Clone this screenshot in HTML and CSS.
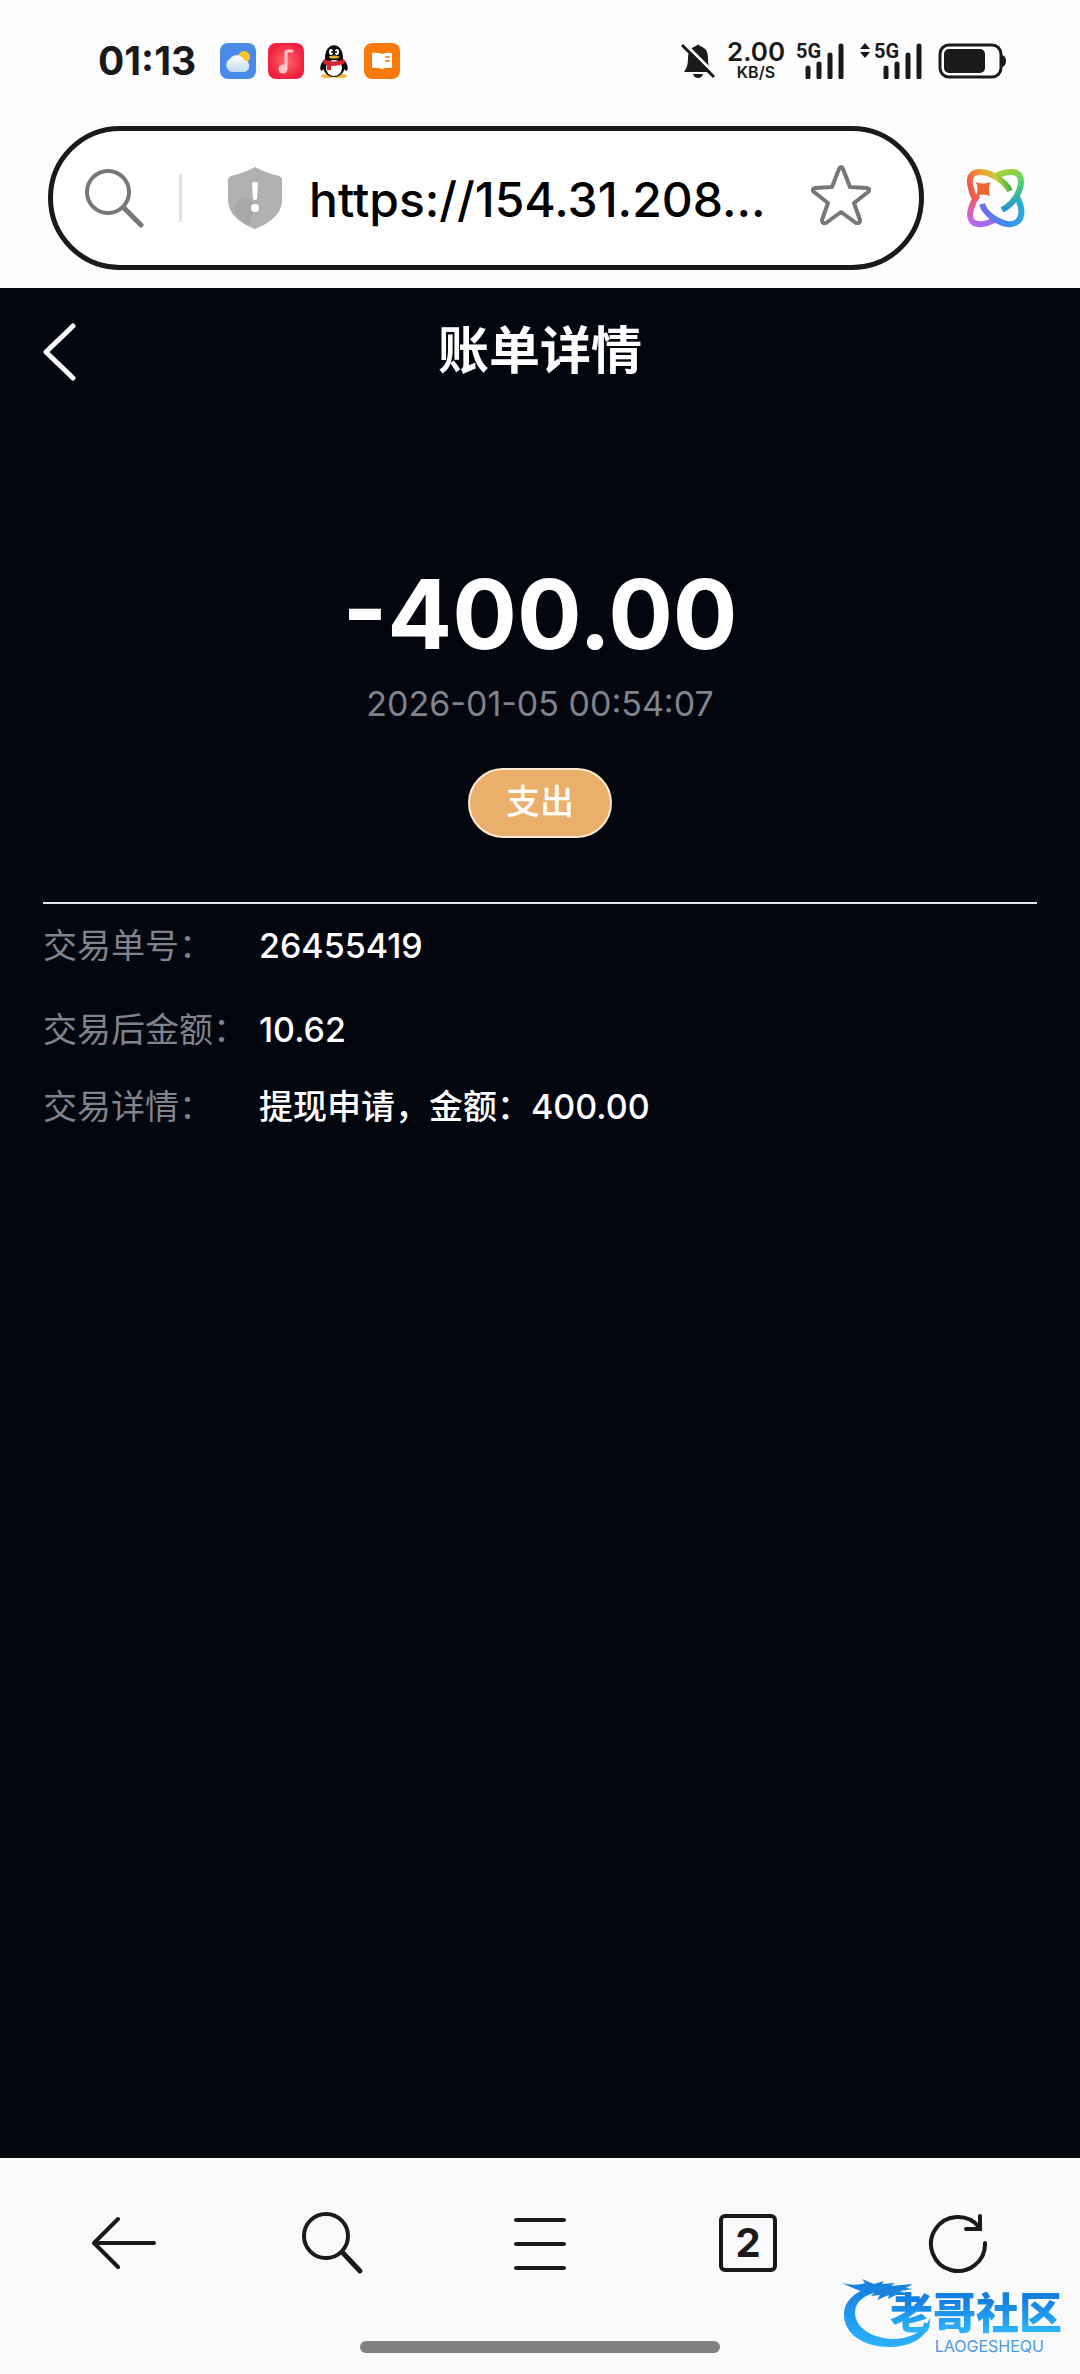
FILE: index.html
```html
<!DOCTYPE html>
<html lang="zh-CN">
<head>
    <meta charset="UTF-8">
    <meta name="viewport" content="width=device-width, initial-scale=1.0">
    <title>账单详情</title>
    <link rel="stylesheet" href="styles.css">
</head>
<body>
    <div class="status-bar">
        <div class="status-left">
            <span class="clock">01:13</span>
            <svg class="app-icon" viewBox="0 0 36 36">
                <defs>
                    <linearGradient id="cloud" x1="0" y1="0" x2="0" y2="1">
                        <stop offset="0" stop-color="#fff"/>
                        <stop offset="1" stop-color="#c3d9f3"/>
                    </linearGradient>
                </defs>
                <rect width="36" height="36" rx="8" fill="#4a8be8"/>
                <circle cx="24" cy="14" r="6" fill="#fbc52c"/>
                <path d="M12 29a7 7 0 0 1-2-13 8 8 0 0 1 14 1 6.200 6.200 0 0 1 1 12z" fill="url(#cloud)"/>
            </svg>
            <svg class="app-icon" viewBox="0 0 36 36">
                <defs>
                    <radialGradient id="music">
                        <stop offset="0" stop-color="#ff6a6a"/>
                        <stop offset="1" stop-color="#f0203f"/>
                    </radialGradient>
                </defs>
                <rect width="36" height="36" rx="8" fill="url(#music)"/>
                <circle cx="15" cy="26" r="4.500" fill="#ffc4c4"/>
                <path d="M18 26V10q0-2 2-2h4" fill="none" stroke="#ffc4c4" stroke-width="3" stroke-linecap="round"/>
            </svg>
            <svg class="app-icon" viewBox="0 0 36 36">
                <ellipse cx="12" cy="33" rx="7" ry="2" fill="#f0b53a"/>
                <ellipse cx="24" cy="33" rx="7" ry="2" fill="#f0b53a"/>
                <path d="M8 17C4 21 3 27 6 28l4-5zM28 17c4 4 5 10 2 11l-4-5z" fill="#0b0b0f"/>
                <ellipse cx="18" cy="23" rx="11" ry="11" fill="#0b0b0f"/>
                <path d="M9 15C9-2 27-2 27 15v5H9z" fill="#0b0b0f"/>
                <ellipse cx="18" cy="25" rx="8" ry="8" fill="#fff"/>
                <path d="M8 16q10 5 20 0l1 4q-5 3-14 3v4h-4v-5l-4-2z" fill="#d8232f"/>
                <ellipse cx="15" cy="9" rx="2" ry="3" fill="#fff"/>
                <ellipse cx="21" cy="9" rx="2" ry="3" fill="#fff"/>
                <circle cx="16" cy="9" r="1" fill="#111"/>
                <circle cx="20" cy="9" r="1" fill="#111"/>
                <ellipse cx="18" cy="14" rx="5" ry="1.500" fill="#f3b12c"/>
            </svg>
            <svg class="app-icon" viewBox="0 0 36 36">
                <rect width="36" height="36" rx="8" fill="#f97a08"/>
                <path d="M8 10q5-1 10 1 5-2 10-1v15q-5-1-10 1-5-2-10-1z" fill="#fff"/>
                <path d="M21 14h5M21 18h5" stroke="#f97a08" stroke-width="1.500"/>
            </svg>
        </div>
        <div class="status-right">
            <svg width="36" height="36" viewBox="0 0 36 36">
                <path d="M4 29c3-4 4-8 4-14C8 8 12 4 16 3q2-3 4 0c6 2 8 6 8 12 0 7 1 10 4 14z" fill="#1a1a1a"/>
                <path d="M13 31h10q-1 4-5 4t-5-4z" fill="#1a1a1a"/>
                <path d="M4 0l33 33" stroke="#fff" stroke-width="3"/>
                <path d="M2 2l32 32" stroke="#1a1a1a" stroke-width="3"/>
            </svg>
            <div class="net-speed">
                <span class="speed-value">2.00</span>
                <span class="speed-unit">KB/S</span>
            </div>
            <div class="signal">
                <span class="signal-type">5G</span>
                <svg width="40" height="36" viewBox="0 0 40 36">
                    <path d="M4 25v9M15 21v13M26 12v22M37 3v31" stroke="#1a1a1a" stroke-width="5" stroke-linecap="round"/>
                </svg>
            </div>
            <div class="signal signal-second">
                <span class="signal-type">5G</span>
                <svg width="62" height="36" viewBox="0 0 62 36">
                    <path d="M0 6l5-6 5 6zM0 9h10l-5 6z" fill="#1a1a1a"/>
                    <path d="M26 25v9M37 21v13M48 12v22M59 3v31" stroke="#1a1a1a" stroke-width="5" stroke-linecap="round"/>
                </svg>
            </div>
            <svg width="68" height="36" viewBox="0 0 68 36">
                <rect x="2" y="2" width="61" height="32" rx="9" fill="none" stroke="#1a1a1a" stroke-width="3"/>
                <rect x="6" y="6" width="41" height="24" rx="5" fill="#1a1a1a"/>
                <path d="M64 12q4 1 4 6t-4 6z" fill="#1a1a1a"/>
            </svg>
        </div>
    </div>

    <div class="address-row">
        <form class="address-bar">
            <svg class="address-search" viewBox="0 0 60 60" fill="none" stroke="#777" stroke-linecap="round">
                <circle cx="24" cy="24" r="21" stroke-width="4"/>
                <path d="M40 40l17 17" stroke-width="5"/>
            </svg>
            <span class="address-divider"></span>
            <svg class="address-shield" viewBox="0 0 54 62">
                <path d="M27 0Q38 6 51 9q3 1 3 4v20C54 48 40 57 27 62 14 57 0 48 0 33V13q0-3 3-4Q16 6 27 0z" fill="#b1b1b1"/>
                <path d="M6 40q3-9 14-9l7 8-6 20Q9 52 6 40z" fill="#a8a8a8"/>
                <path d="M24 16q3-3 6 0l-1 16q-2 2-4 0z" fill="#fff"/>
                <circle cx="27" cy="41" r="4" fill="#fff"/>
            </svg>
            <input class="address-input" type="text" value="https://154.31.208..." aria-label="网址">
            <button class="icon-btn star-btn" type="button" aria-label="收藏">
                <svg width="60" height="60" viewBox="0 0 60 60">
                    <path d="M28 4q2-4 4 0l7 18 17 1q4 1 1 4L43 38l6 17q0 4-4 3L30 47 15 58q-4 1-4-3l6-17L3 27q-3-3 1-4l17-1z" fill="none" stroke="#777" stroke-width="4" stroke-linejoin="round"/>
                </svg>
            </button>
        </form>
        <button class="icon-btn" type="button" aria-label="AI 助手">
            <svg width="60" height="60" viewBox="-1 -1 60 60" fill="none" stroke-width="6" stroke-linecap="butt">
                <defs>
                    <linearGradient id="g1" gradientUnits="userSpaceOnUse" x1="3" y1="30" x2="43" y2="16">
                        <stop offset="0" stop-color="#f04a58"/>
                        <stop offset=".45" stop-color="#f59b2c"/>
                        <stop offset=".75" stop-color="#c5cb35"/>
                        <stop offset="1" stop-color="#38b84c"/>
                    </linearGradient>
                    <linearGradient id="g2" gradientUnits="userSpaceOnUse" x1="30" y1="4" x2="44" y2="42">
                        <stop offset="0" stop-color="#a5d338"/>
                        <stop offset=".5" stop-color="#4ace78"/>
                        <stop offset="1" stop-color="#1f8be0"/>
                    </linearGradient>
                    <linearGradient id="g3" gradientUnits="userSpaceOnUse" x1="54" y1="30" x2="16" y2="46">
                        <stop offset="0" stop-color="#28b2d4"/>
                        <stop offset=".5" stop-color="#3590ee"/>
                        <stop offset="1" stop-color="#7a68ec"/>
                    </linearGradient>
                    <linearGradient id="g4" gradientUnits="userSpaceOnUse" x1="10" y1="28" x2="22" y2="54">
                        <stop offset="0" stop-color="#ee5575"/>
                        <stop offset=".6" stop-color="#cb67dc"/>
                        <stop offset="1" stop-color="#9b6cf4"/>
                    </linearGradient>
                </defs>
                <path d="M29 50C22 54 16 56 11 55 3 54 2 47 4 40c1-4 3-9 7-14" stroke="url(#g4)"/>
                <path d="M49 26c5 9 6 16 5 20-1 7-7 10-14 9-10-2-22-10-25-20" stroke="url(#g3)"/>
                <path d="M27 8c7-4 13-5 18-5 9 0 11 9 7 19-3 8-10 15-17 19" stroke="url(#g2)"/>
                <path d="M43 22C38 12 24 3 13 3 4 3 1 9 4 19c1 5 2 8 5 12" stroke="url(#g1)"/>
                <path d="M9 13q7 3 14 0-2 7 0 14-7-3-14 0 3-7 0-14z" fill="#f0652f"/>
            </svg>
        </button>
    </div>

    <main class="bill">
        <header class="bill-header">
            <button class="icon-btn back-btn" type="button" aria-label="返回">
                <svg width="34" height="60" viewBox="0 0 34 60">
                    <path d="M31 4L4 30l27 26" fill="none" stroke="#fff" stroke-width="5" stroke-linecap="round" stroke-linejoin="round"/>
                </svg>
            </button>
            <h1>账单详情</h1>
        </header>

        <section class="bill-summary">
            <div class="amount">-400.00</div>
            <div class="bill-time">2026-01-05 00:54:07</div>
            <span class="bill-type">支出</span>
        </section>

        <dl class="bill-info">
            <div class="info-row">
                <dt>交易单号：</dt>
                <dd>26455419</dd>
            </div>
            <div class="info-row">
                <dt>交易后金额：</dt>
                <dd>10.62</dd>
            </div>
            <div class="info-row">
                <dt>交易详情：</dt>
                <dd>提现申请，金额：400.00</dd>
            </div>
        </dl>
    </main>

    <footer class="browser-footer">
        <nav class="toolbar">
            <button class="icon-btn" type="button" aria-label="后退">
                <svg width="64" height="64" viewBox="0 0 64 64">
                    <path d="M62 32H2M26 8L2 32l24 24" fill="none" stroke="#1a1a1a" stroke-width="4" stroke-linecap="round" stroke-linejoin="round"/>
                </svg>
            </button>
            <button class="icon-btn" type="button" aria-label="搜索">
                <svg width="64" height="64" viewBox="0 0 64 64" fill="none" stroke="#1a1a1a" stroke-width="4" stroke-linecap="round">
                    <circle cx="26" cy="25" r="22"/>
                    <path d="M43 42l17 18" stroke-width="5"/>
                </svg>
            </button>
            <button class="icon-btn" type="button" aria-label="菜单">
                <svg width="64" height="64" viewBox="0 0 64 64">
                    <path d="M8 9h48M8 33h48M8 57h48" stroke="#1a1a1a" stroke-width="4" stroke-linecap="round"/>
                </svg>
            </button>
            <button class="tab-count" type="button" aria-label="标签页">2</button>
            <button class="icon-btn" type="button" aria-label="刷新">
                <svg width="64" height="64" viewBox="0 0 64 64" fill="none" stroke="#1a1a1a" stroke-width="4" stroke-linecap="round">
                    <path d="M61 32A27 27 0 1 1 55 16"/>
                    <path d="M56 5v13H42"/>
                </svg>
            </button>
        </nav>
        <div class="home-handle"></div>
        <div class="watermark">
            <svg class="watermark-dragon" viewBox="0 0 92 72">
                <defs>
                    <linearGradient id="dragon" x1="0" y1="0" x2="0" y2="1">
                        <stop offset="0" stop-color="#1480e0"/>
                        <stop offset="1" stop-color="#2cb2fb"/>
                    </linearGradient>
                </defs>
                <path d="M36 7C14 12 2 22 2 37c0 19 20 32 46 32 22 0 40-11 40-29-6 14-20 21-38 21-20-1-37-11-37-27 0-10 9-18 27-21z" fill="url(#dragon)"/>
                <path d="M0 5q10 3 20 1l3-1-3-4 12 5 10-3-2 3 13-1-4 3 22-2-7 4 7 1-13 2 10 4-14 0-8 4 1-4-12 5 3-5-9 1 4-4-9 1Q10 10 0 5z" fill="#1b82dd"/>
            </svg>
            <span class="watermark-name">老哥社区</span>
            <span class="watermark-pinyin">LAOGESHEQU</span>
        </div>
    </footer>
</body>
</html>
```
FILE: styles.css
```css
* {
    box-sizing: border-box;
}

body {
    margin: 0;
    min-height: 100vh;
    display: flex;
    flex-direction: column;
    font-family: Inter, "Noto Sans CJK SC", sans-serif;
    background-color: #fdfdfd;
    color: #1a1a1a;
}

svg {
    display: block;
    flex-shrink: 0;
}

.icon-btn {
    padding: 0;
    border: none;
    background: none;
    cursor: pointer;
}

/* status bar */
.status-bar {
    display: flex;
    justify-content: space-between;
    height: 126px;
    padding: 42px 74px 0 98px;
}

.status-left,
.status-right {
    display: flex;
    height: 38px;
    align-items: center;
}

.status-left {
    gap: 12px;
}

.clock {
    width: 110px;
    font-size: 39px;
    line-height: 38px;
    font-weight: 700;
}

.app-icon {
    width: 36px;
    height: 36px;
}

.status-right {
    gap: 12px;
}

.net-speed {
    display: flex;
    flex-direction: column;
    align-items: center;
    width: 56px;
    font-weight: 600;
}

.speed-value {
    font-size: 26px;
    line-height: 22px;
}

.speed-unit {
    font-size: 16px;
    line-height: 18px;
}

.signal {
    position: relative;
    margin-right: 4px;
    padding-left: 8px;
}

.signal-second {
    padding-left: 0;
}

.signal-type {
    position: absolute;
    left: 0;
    top: 0;
    font-family: Roboto, sans-serif;
    font-size: 20px;
    line-height: 16px;
    font-weight: 700;
}

.signal-second .signal-type {
    left: 14px;
}

/* address bar */
.address-row {
    display: flex;
    align-items: center;
    gap: 42px;
    padding: 0 54px 18px 48px;
}

.address-bar {
    flex: 1;
    min-width: 0;
    display: flex;
    align-items: center;
    height: 144px;
    padding: 0 48px 0 31px;
    border: 5px solid #1a1a1a;
    border-radius: 72px;
    background-color: #fff;
}

.address-search {
    width: 60px;
    height: 60px;
}

.address-divider {
    width: 3px;
    height: 48px;
    margin: 0 46px 0 35px;
    background-color: #e2e2e2;
}

.address-shield {
    width: 54px;
    height: 62px;
}

.address-input {
    flex: 1;
    min-width: 0;
    margin-left: 27px;
    padding: 2px 0 0;
    border: none;
    outline: none;
    background: none;
    font-family: inherit;
    font-size: 48px;
    font-weight: 500;
    color: #000;
}

.star-btn {
    padding-bottom: 6px;
}

/* bill page */
.bill {
    flex: 1;
    background-color: #03060f;
    color: #fff;
}

.bill-header {
    position: relative;
    display: flex;
    align-items: center;
    justify-content: center;
    height: 126px;
}

.bill-header h1 {
    margin: 0;
    font-size: 51px;
    line-height: 72px;
    font-weight: 700;
}

.back-btn {
    position: absolute;
    left: 42px;
    top: 34px;
}

.bill-summary {
    display: flex;
    flex-direction: column;
    align-items: center;
    margin: 0 43px;
    padding: 140px 0 64px;
    border-bottom: 2px solid #e4e6ec;
}

.amount {
    font-size: 96px;
    line-height: 120px;
    font-weight: 700;
}

.bill-time {
    margin-top: 6px;
    font-size: 34px;
    line-height: 48px;
    color: #80828c;
}

.bill-type {
    width: 144px;
    height: 70px;
    margin-top: 40px;
    border: 2px solid #fdebd5;
    border-radius: 35px;
    background-color: #ebaf6c;
    font-size: 34px;
    line-height: 64px;
    font-weight: 500;
    text-align: center;
}

.bill-info {
    margin: 0 43px;
    font-size: 34px;
    line-height: 48px;
}

.info-row {
    display: flex;
    align-items: center;
    min-height: 84px;
}

.info-row:last-child {
    min-height: 70px;
}

.info-row dt {
    width: 216px;
    flex-shrink: 0;
    white-space: nowrap;
    color: #80828c;
}

.info-row dd {
    margin: 0;
    font-weight: 500;
}

/* browser toolbar */
.browser-footer {
    position: relative;
    height: 216px;
    padding: 53px 20px 0;
    background-color: #fafafa;
}

.toolbar {
    display: grid;
    grid-template-columns: repeat(5, 1fr);
    justify-items: center;
    align-items: center;
    height: 64px;
}

.tab-count {
    width: 58px;
    height: 58px;
    padding: 0;
    border: 4px solid #1a1a1a;
    border-radius: 6px;
    background: none;
    font-family: inherit;
    font-size: 40px;
    line-height: 50px;
    font-weight: 700;
    color: #1a1a1a;
}

.home-handle {
    width: 360px;
    height: 12px;
    margin: 66px auto 0;
    border-radius: 6px;
    background-color: #808080;
}

/* site watermark, lies over the toolbar */
.watermark {
    position: absolute;
    right: 18px;
    bottom: 24px;
    width: 220px;
    height: 72px;
}

.watermark-dragon {
    width: 92px;
    height: 72px;
}

.watermark-name {
    position: absolute;
    right: 0;
    top: 14px;
    font-size: 43px;
    line-height: 42px;
    font-weight: 900;
    white-space: nowrap;
    color: transparent;
    background: linear-gradient(#1480e0 20%, #2cb2fb 90%);
    background-clip: text;
    -webkit-background-clip: text;
}

.watermark-pinyin {
    position: absolute;
    right: 18px;
    bottom: -4px;
    font-size: 16px;
    line-height: 16px;
    color: #4a9be0;
}
```
